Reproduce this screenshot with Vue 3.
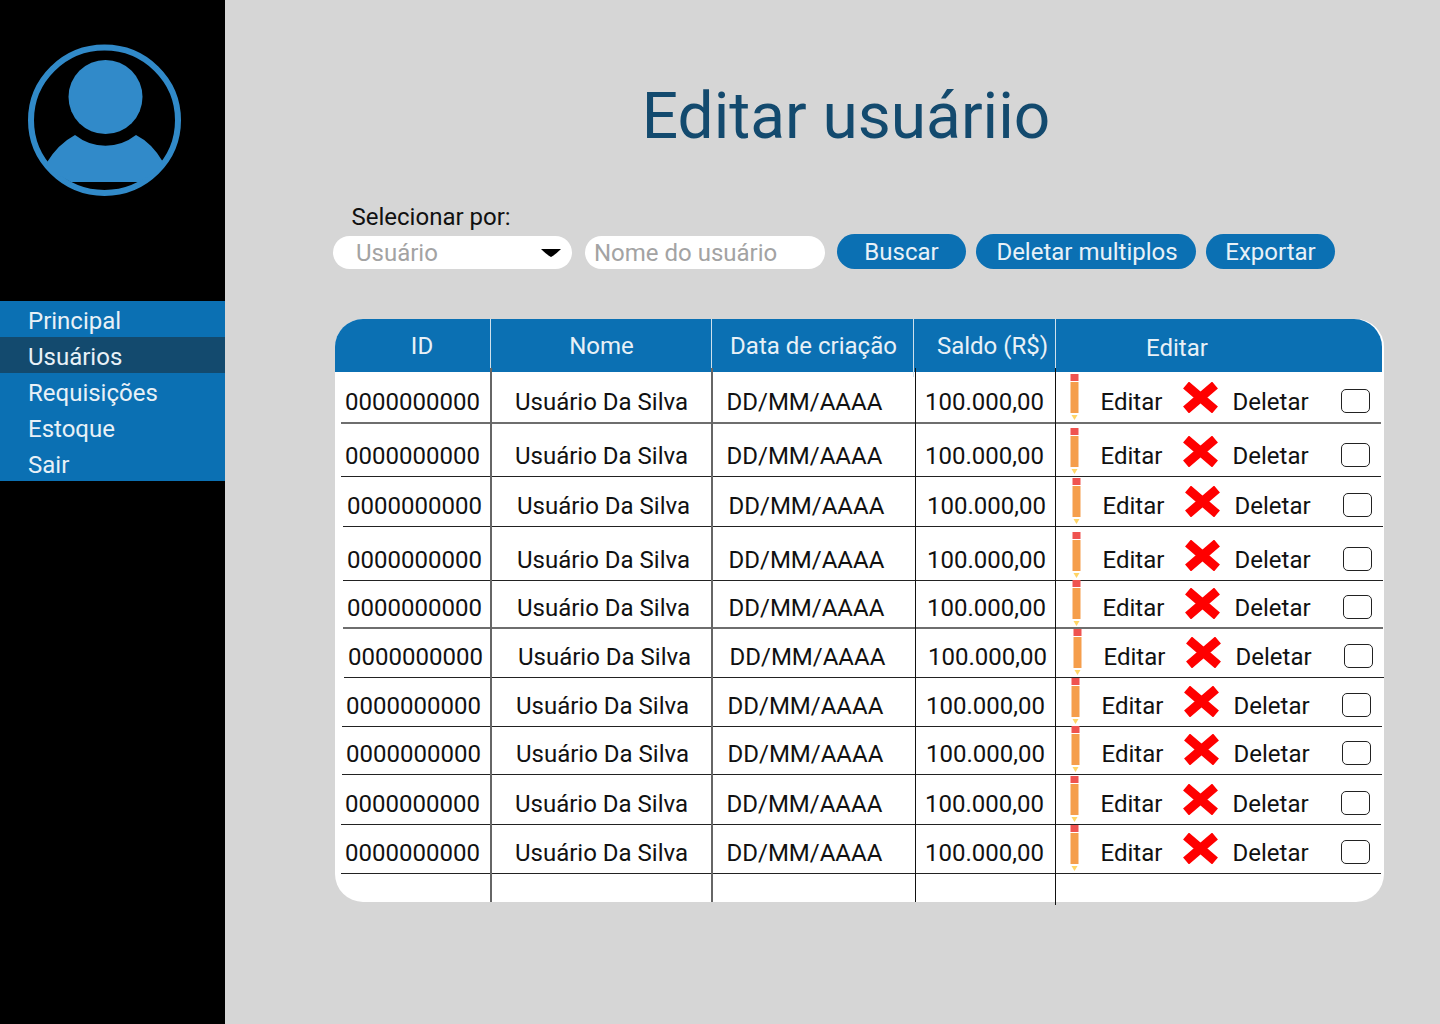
<template>
  <div class="page">
    <!-- Sidebar -->
    <aside class="sidebar">
      <svg class="avatar" width="160" height="160" viewBox="24 40 160 160">
        <ellipse cx="104.5" cy="120.3" rx="73.5" ry="72.7" fill="none" stroke="#318ac9" stroke-width="6" />
        <circle cx="105.5" cy="97" r="37" fill="#318ac9" />
        <path d="M46.5 163 Q58 144 75 135 A49 49 0 0 0 136 135 Q152 143 163 162 A71.5 71.5 0 0 1 139 182 L71 182 A71.5 71.5 0 0 1 46.5 163 Z" fill="#318ac9" />
      </svg>
      <nav class="menu">
        <a v-for="item in menu" :key="item" :class="['menu-item', { active: item === 'Usuários' }]">{{ item }}</a>
      </nav>
    </aside>

    <main class="content">
      <h1 class="title">Editar usuáriio</h1>

      <div class="filter-label">Selecionar por:</div>
      <div class="toolbar">
        <div class="pill select">
          <span>Usuário</span>
          <svg width="20" height="8" viewBox="0 0 20 8"><path d="M0 0 H20 Q14 6 10 8 Q6 6 0 0 Z" fill="#000" /></svg>
        </div>
        <input class="pill search" placeholder="Nome do usuário" />
        <button class="btn btn-search">Buscar</button>
        <button class="btn btn-multi">Deletar multiplos</button>
        <button class="btn btn-export">Exportar</button>
      </div>

      <!-- Table -->
      <section class="card">
        <div class="head">
          <div class="head-cell h-id">ID</div>
          <div class="head-cell h-name">Nome</div>
          <div class="head-cell h-date">Data de criação</div>
          <div class="head-cell h-saldo">Saldo (R$)</div>
          <div class="head-cell h-edit">Editar</div>
        </div>

        <div
          v-for="(row, index) in rows"
          :key="index"
          :class="['row', { soft: row.soft }]"
          :style="{ height: row.h + 'px', paddingTop: row.pad + 'px', marginLeft: row.off + 'px' }"
        >
          <span>0000000000</span>
          <span>Usuário Da Silva</span>
          <span>DD/MM/AAAA</span>
          <span>100.000,00</span>
          <svg class="pencil" width="10" height="46" viewBox="0 0 10 46">
            <rect x="0.5" y="0" width="8" height="7" fill="#ef5350" />
            <rect x="0.5" y="8" width="8" height="31" fill="#f59e4c" />
            <path d="M1.5 41 H7.5 L4.5 46 Z" fill="#ffd566" />
          </svg>
          <span>Editar</span>
          <svg class="cross" width="35" height="31" viewBox="0 0 35 31">
            <path d="M3 3 L32 28 M32 3 L3 28" stroke="#ff0000" stroke-width="9" fill="none" />
          </svg>
          <span>Deletar</span>
          <span class="check"></span>
        </div>

        <!-- column rules run over the rows -->
        <i class="rule r1"></i>
        <i class="rule r2"></i>
        <i class="rule r3"></i>
        <i class="rule r4"></i>
      </section>
    </main>
  </div>
</template>

<script setup>
const menu = ['Principal', 'Usuários', 'Requisições', 'Estoque', 'Sair']

// row heights and offsets are uneven in the design
const rows = [
  { h: 52, pad: 16, off: 0, soft: true },
  { h: 53, pad: 18, off: 0 },
  { h: 50, pad: 15, off: 2 },
  { h: 54, pad: 19, off: 2 },
  { h: 48, pad: 13, off: 2, soft: true },
  { h: 49, pad: 14, off: 3 },
  { h: 49, pad: 14, off: 1 },
  { h: 48, pad: 13, off: 1 },
  { h: 50, pad: 15, off: 0 },
  { h: 49, pad: 14, off: 0 }
]
</script>

<style>
body {
  margin: 0;
  background: #d6d6d6;
}
</style>

<style scoped>
.page {
  display: flex;
  width: 1440px;
  height: 1024px;
  overflow: hidden;
  background: #d6d6d6;
  font-family: Roboto, sans-serif;
  font-size: 24px;
  color: #111;
}

.sidebar {
  width: 225px;
  flex-shrink: 0;
  background: #000;
  padding-top: 40px;
  box-sizing: border-box;
}

.avatar {
  display: block;
  margin-left: 24px;
}

.menu {
  margin-top: 101px;
  background: #0b70b3;
}

.menu-item {
  display: block;
  height: 36px;
  line-height: 40px;
  padding-left: 28px;
  color: #e8f1f7;
}

.menu-item.active {
  background: #134a6e;
}

.content {
  flex: 1;
  padding-left: 108px;
}

.title {
  margin: 76px 0 0;
  width: 1026px;
  text-align: center;
  font-size: 64px;
  line-height: 82px;
  font-weight: 400;
  color: #134a6e;
}

.filter-label {
  margin: 45px 0 0 18.5px;
  line-height: 28px;
}

.toolbar {
  display: flex;
  align-items: flex-end;
  margin-top: 3px;
  height: 35px;
}

.pill {
  height: 33px;
  box-sizing: border-box;
  background: #fff;
  border: 0;
  border-radius: 17px;
  font: inherit;
  color: #a3a3a3;
}

.select {
  display: flex;
  align-items: center;
  justify-content: space-between;
  width: 239px;
  padding: 0 11px 0 23px;
}

.search {
  width: 240px;
  margin-left: 13px;
  padding: 0 9px;
  outline: none;
}

.search::placeholder {
  color: #a3a3a3;
  opacity: 1;
}

.btn {
  height: 35px;
  padding: 0;
  border: 0;
  border-radius: 18px;
  background: #0b70b3;
  color: #e8f1f7;
  font: inherit;
}

.btn-search {
  width: 129px;
  margin-left: 12px;
}

.btn-multi {
  width: 220px;
  margin-left: 10px;
  padding-left: 2px;
}

.btn-export {
  width: 129px;
  margin-left: 10px;
}

.card {
  position: relative;
  width: 1049px;
  height: 583px;
  margin: 50px 0 0 2px;
  background: #fff;
  border-radius: 28px;
}

.head {
  display: grid;
  grid-template-columns: 156px 221px 202px 142px 326px;
  height: 53px;
  width: 1047px;
  background: #0b70b3;
  border-radius: 28px 28px 0 0;
  color: #e8f1f7;
}

.head-cell {
  line-height: 54px;
  text-align: center;
  box-sizing: border-box;
  border-right: 1px solid #cfe0ec;
}

.h-id {
  padding-left: 19px;
}

.h-name {
  padding-left: 1px;
}

.h-date {
  padding-left: 2px;
}

.h-saldo {
  padding-left: 16px;
}

.h-edit {
  padding-right: 84px;
  line-height: 58px;
  border-right: 0;
}

.row {
  display: grid;
  grid-template-columns: 170px 211.5px 198.5px 145px 30.5px 82.5px 49.5px 108.5px 30px;
  align-items: start;
  box-sizing: border-box;
  width: 1040px;
  position: relative;
  left: 6px;
  padding-left: 4px;
  border-bottom: 1px solid #222;
  line-height: 28px;
}

.row.soft {
  border-bottom: 2px solid #6e6e6e;
}

.pencil {
  margin-top: -14px;
}

.cross {
  margin-top: -6px;
}

.check {
  display: block;
  box-sizing: border-box;
  width: 29px;
  height: 24px;
  margin-top: 1px;
  border: 1px solid #222;
  border-radius: 5px;
}

.rule {
  position: absolute;
  top: 49px;
  width: 2px;
  height: 534px;
  background: #666;
}

.r1 {
  left: 155px;
}

.r2 {
  left: 376px;
}

.r3 {
  left: 580px;
  width: 1px;
  background: #111;
}

.r4 {
  left: 720px;
  width: 1px;
  height: 537px;
  background: #111;
}
</style>
